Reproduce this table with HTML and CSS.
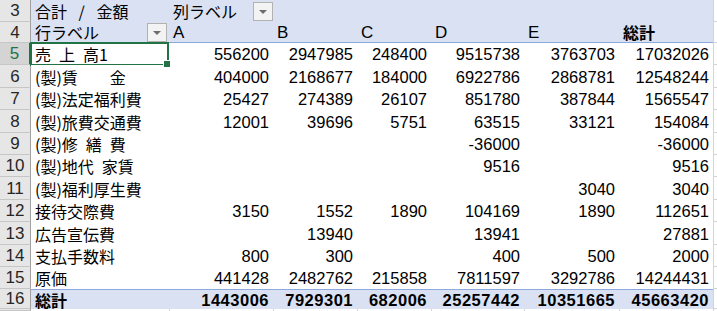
FILE: index.html
```html
<!DOCTYPE html>
<html lang="ja">
<head>
<meta charset="utf-8">
<title>Pivot</title>
<link rel="stylesheet" href="styles.css">
</head>
<body>
<div class="sheet">
  <div class="row">
    <div class="rh">3</div>
    <div class="c hdr">合計&ensp;&nbsp;/&ensp;&nbsp;金額</div>
    <div class="c hdr">列ラベル<span class="dd dd-top"></span></div>
    <div class="c hdr"></div><div class="c hdr"></div><div class="c hdr"></div><div class="c hdr"></div><div class="c hdr"></div>
    <div class="pad"></div>
  </div>
  <div class="row">
    <div class="rh">4</div>
    <div class="c hdr line">行ラベル<span class="dd dd-row"></span></div>
    <div class="c hdr line lat">A</div>
    <div class="c hdr line lat">B</div>
    <div class="c hdr line lat">C</div>
    <div class="c hdr line lat">D</div>
    <div class="c hdr line lat">E</div>
    <div class="c hdr line bold">総計</div>
    <div class="pad"></div>
  </div>
  <div class="row">
    <div class="rh sel">5</div>
    <div class="c active">売&ensp;上&ensp;高1</div>
    <div class="c num">556200</div><div class="c num">2947985</div><div class="c num">248400</div><div class="c num">9515738</div><div class="c num">3763703</div><div class="c num">17032026</div>
    <div class="pad"></div>
  </div>
  <div class="row">
    <div class="rh">6</div>
    <div class="c">(製)賃　　金</div>
    <div class="c num">404000</div><div class="c num">2168677</div><div class="c num">184000</div><div class="c num">6922786</div><div class="c num">2868781</div><div class="c num">12548244</div>
    <div class="pad"></div>
  </div>
  <div class="row">
    <div class="rh">7</div>
    <div class="c">(製)法定福利費</div>
    <div class="c num">25427</div><div class="c num">274389</div><div class="c num">26107</div><div class="c num">851780</div><div class="c num">387844</div><div class="c num">1565547</div>
    <div class="pad"></div>
  </div>
  <div class="row">
    <div class="rh">8</div>
    <div class="c">(製)旅費交通費</div>
    <div class="c num">12001</div><div class="c num">39696</div><div class="c num">5751</div><div class="c num">63515</div><div class="c num">33121</div><div class="c num">154084</div>
    <div class="pad"></div>
  </div>
  <div class="row">
    <div class="rh">9</div>
    <div class="c">(製)修&ensp;繕&ensp;費</div>
    <div class="c num"></div><div class="c num"></div><div class="c num"></div><div class="c num">-36000</div><div class="c num"></div><div class="c num">-36000</div>
    <div class="pad"></div>
  </div>
  <div class="row">
    <div class="rh">10</div>
    <div class="c">(製)地代&ensp;家賃</div>
    <div class="c num"></div><div class="c num"></div><div class="c num"></div><div class="c num">9516</div><div class="c num"></div><div class="c num">9516</div>
    <div class="pad"></div>
  </div>
  <div class="row">
    <div class="rh">11</div>
    <div class="c">(製)福利厚生費</div>
    <div class="c num"></div><div class="c num"></div><div class="c num"></div><div class="c num"></div><div class="c num">3040</div><div class="c num">3040</div>
    <div class="pad"></div>
  </div>
  <div class="row">
    <div class="rh">12</div>
    <div class="c">接待交際費</div>
    <div class="c num">3150</div><div class="c num">1552</div><div class="c num">1890</div><div class="c num">104169</div><div class="c num">1890</div><div class="c num">112651</div>
    <div class="pad"></div>
  </div>
  <div class="row">
    <div class="rh">13</div>
    <div class="c">広告宣伝費</div>
    <div class="c num"></div><div class="c num">13940</div><div class="c num"></div><div class="c num">13941</div><div class="c num"></div><div class="c num">27881</div>
    <div class="pad"></div>
  </div>
  <div class="row">
    <div class="rh">14</div>
    <div class="c">支払手数料</div>
    <div class="c num">800</div><div class="c num">300</div><div class="c num"></div><div class="c num">400</div><div class="c num">500</div><div class="c num">2000</div>
    <div class="pad"></div>
  </div>
  <div class="row">
    <div class="rh">15</div>
    <div class="c">原価</div>
    <div class="c num">441428</div><div class="c num">2482762</div><div class="c num">215858</div><div class="c num">7811597</div><div class="c num">3292786</div><div class="c num">14244431</div>
    <div class="pad"></div>
  </div>
  <div class="row">
    <div class="rh">16</div>
    <div class="c tot">総計</div>
    <div class="c tot num">1443006</div><div class="c tot num">7929301</div><div class="c tot num">682006</div><div class="c tot num">25257442</div><div class="c tot num">10351665</div><div class="c tot num">45663420</div>
    <div class="pad"></div>
  </div>
  <div class="row">
    <div class="rh"></div>
    <div class="g"></div><div class="g gl"></div><div class="g gl"></div><div class="g gl"></div><div class="g gl"></div><div class="g gl"></div><div class="g gl"></div><div class="g gl"></div>
  </div>
</div>
</body>
</html>
```

FILE: styles.css
```css
* { box-sizing: border-box; }
html, body { margin: 0; padding: 0; background: #fff; }
body {
  font-family: "Noto Sans CJK JP", "Noto Sans", sans-serif;
  font-size: 16px;
  color: #000;
  overflow: hidden;
}
.sheet {
  display: grid;
  grid-template-columns: 31px 138px 104px 84px 74px 93px 95px 94px 1fr;
  grid-template-rows: 22px 21px 22px 23px 22px 23px 22px 22px 23px 22px 23px 22px 22px 20px 1fr;
  width: 717px;
  height: 311px;
}
.row { display: contents; }
.rh {
  background: #e6e6e6;
  border-right: 1px solid #a0a0a0;
  border-bottom: 1px solid #c6c6c6;
  display: flex;
  align-items: center;
  justify-content: center;
  color: #262626;
  line-height: 1;
  font-family: "Liberation Sans", Arial, sans-serif;
  font-size: 17px;
  overflow: hidden;
}
.rh.sel {
  background: #d4d4d4;
  color: #217346;
  border-right: 2px solid #217346;
}
.c {
  position: relative;
  display: flex;
  align-items: center;
  padding: 0 4px;
  white-space: nowrap;
  line-height: 1;
  background: #fff;
}
.num {
  justify-content: flex-end;
  font-family: "Liberation Sans", Arial, sans-serif;
  font-size: 16.5px;
  padding-top: 1px;
}
.lat {
  font-family: "Liberation Sans", Arial, sans-serif;
  font-size: 17px;
  padding-top: 1px;
}
.hdr { background: #d9e1f2; }
.line { border-bottom: 1px solid #8ea9db; }
.bold { font-weight: 700; }
.tot {
  background: #d9e1f2;
  border-top: 1px solid #8ea9db;
  font-weight: 700;
}
.tot.num { letter-spacing: 0.5px; }
.pad {
  background: #fff;
  border-left: 1px solid #d4d4d4;
  border-bottom: 1px solid #d4d4d4;
}
.g { background: #fff; }
.gl { border-left: 1px solid #d4d4d4; }
.active::after {
  content: "";
  position: absolute;
  left: -1px;
  top: -1px;
  right: 0;
  bottom: -1px;
  border: 2px solid #217346;
}
.active::before {
  content: "";
  position: absolute;
  right: -2px;
  bottom: -3px;
  width: 6px;
  height: 6px;
  background: #217346;
  border: 1px solid #fff;
  z-index: 2;
}
.dd {
  position: absolute;
  width: 20px;
  height: 19px;
  border: 1px solid #b2b2b2;
  background: #f3f3f3;
}
.dd::after {
  content: "";
  position: absolute;
  left: 5px;
  top: 7px;
  border-left: 4px solid transparent;
  border-right: 4px solid transparent;
  border-top: 4px solid #6d6d6d;
}
.dd-top { right: 0; top: 2px; }
.dd-row { right: 2px; top: 1px; }
```
